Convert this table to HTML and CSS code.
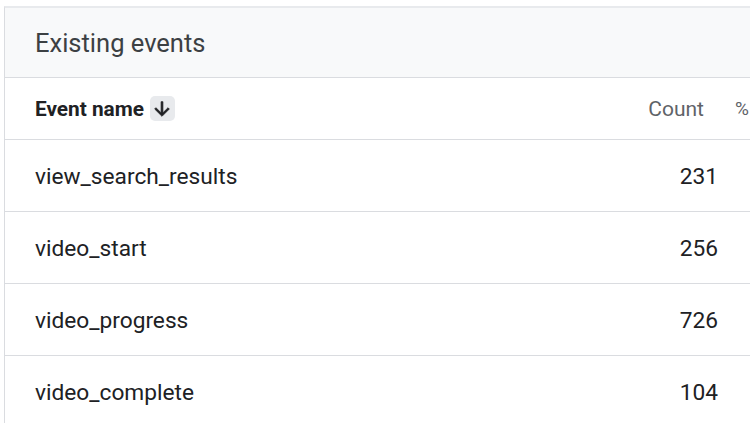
FILE: index.html
```html
<!DOCTYPE html>
<html>
<head>
<meta charset="utf-8">
<link rel="stylesheet" href="styles.css">
</head>
<body>
<div class="panel">
  <div class="title">Existing events</div>
  <div class="row head">
    <div class="name">Event name <span class="sort"><svg width="22" height="22" viewBox="0 0 24 24"><path d="M20 12l-1.41-1.41L13 16.17V4h-2v12.17l-5.58-5.59L4 12l8 8 8-8z" fill="#202124" stroke="#202124" stroke-width="0.8"/></svg></span></div>
    <div class="count">Count</div>
    <div class="pct">%</div>
  </div>
  <div class="row"><div class="name">view_search_results</div><div class="count">231</div><div class="pct"></div></div>
  <div class="row"><div class="name">video_start</div><div class="count">256</div><div class="pct"></div></div>
  <div class="row"><div class="name">video_progress</div><div class="count">726</div><div class="pct"></div></div>
  <div class="row"><div class="name">video_complete</div><div class="count">104</div><div class="pct"></div></div>
</div>
</body>
</html>
```
FILE: styles.css
```css
html, body {
  margin: 0;
  background: #ffffff;
  overflow: hidden;
}
body {
  font-family: Roboto, "Liberation Sans", sans-serif;
  color: #202124;
  width: 750px;
  height: 423px;
}
.panel {
  margin-top: 6px;
  margin-left: 4px;
  border-left: 1px solid #dadce0;
  border-top: 2px solid #e8eaed;
  width: 745px;
}
.title {
  background: #f8f9fa;
  height: 70px;
  box-sizing: border-box;
  border-bottom: 1px solid #dadce0;
  padding-left: 30px;
  padding-top: 1px;
  display: flex;
  align-items: center;
  font-size: 25.5px;
  color: #3c4043;
}
.row {
  display: flex;
  align-items: center;
  height: 72px;
  box-sizing: border-box;
  border-bottom: 1px solid #dadce0;
  padding-left: 30px;
  padding-top: 2px;
  font-size: 22.7px;
}
.row.head {
  height: 62px;
  padding-top: 0;
  font-size: 20.8px;
}
.name {
  flex: 1;
  display: flex;
  align-items: center;
}
.head .name {
  font-weight: 700;
}
.sort {
  display: inline-flex;
  align-items: center;
  justify-content: center;
  width: 25px;
  height: 25px;
  border-radius: 5px;
  background: #e8eaed;
  margin-left: 6px;
}
.count {
  width: 120px;
  text-align: right;
  box-sizing: border-box;
}
.head .count {
  padding-right: 14px;
  color: #5f6368;
  font-size: 21px;
}
.pct {
  width: 32px;
  box-sizing: border-box;
  padding-left: 17px;
  color: #5f6368;
  font-size: 19px;
}
.row:not(.head) .pct {
  padding-left: 0;
}
```
